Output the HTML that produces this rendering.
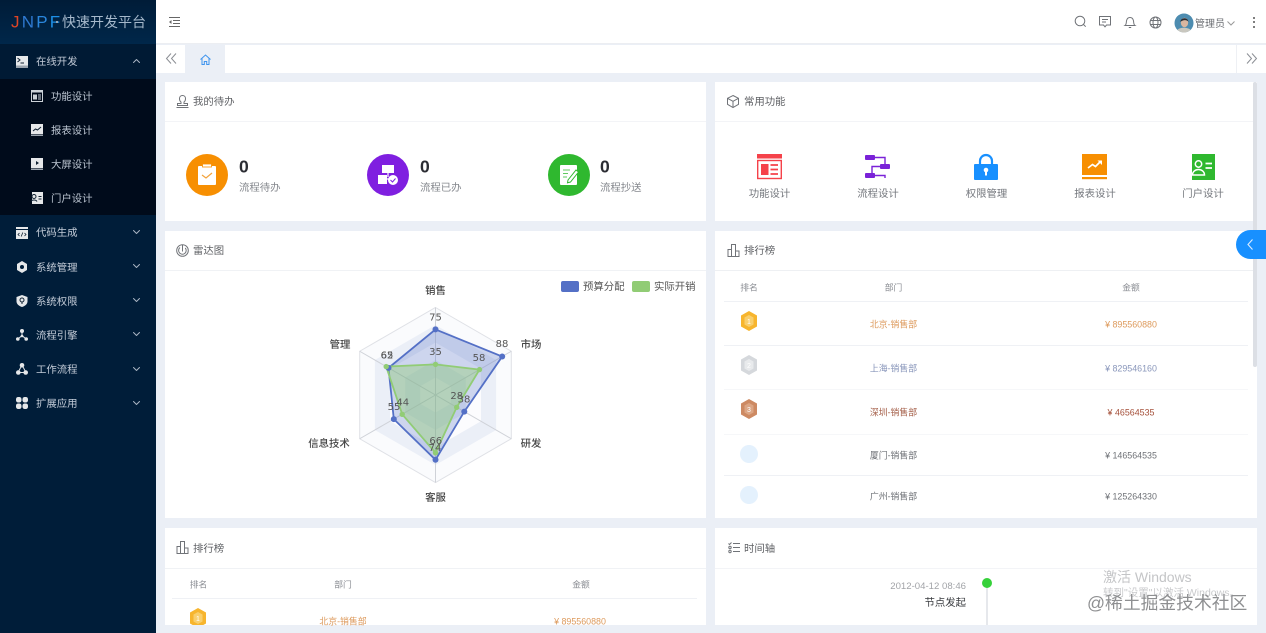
<!DOCTYPE html>
<html lang="zh"><head><meta charset="utf-8"><title>JNPF</title>
<style>
*{box-sizing:border-box;margin:0;padding:0}
html,body{width:1266px;height:633px;overflow:hidden;background:#ebeff6;font-family:"Liberation Sans","Noto Sans CJK SC",sans-serif;color:#606266}
#w{position:absolute;left:0;top:0;width:1266px;height:633px;overflow:hidden;filter:blur(.35px)}
.a{position:absolute}
.t,.c,.r{position:absolute;white-space:nowrap;line-height:1;font-size:10.4px}
.t{transform:translate(0,calc(-50% + 2px))}.c{transform:translate(-50%,calc(-50% + 2px))}.r{transform:translate(-100%,calc(-50% + 2px))}
svg{position:absolute;overflow:visible}
.card{position:absolute;background:#fff}
.ln{position:absolute;height:1px;background:#eff1f5}
.m{color:#c3ccd8}.s{color:#bcc6d2}
.g{fill:none;stroke:#707378;stroke-width:1}
.w{fill:none;stroke:#a9b5c3;stroke-width:1;stroke-linecap:round;stroke-linejoin:round}
.h{font-size:8.8px;color:#8b8e94}
.d{font-size:8.9px}
</style></head><body><div id="w">

<!-- sidebar -->
<div class="a" style="left:0;top:0;width:156px;height:633px;background:#001d39"></div>
<div class="a" style="left:0;top:0;width:156px;height:44px;background:linear-gradient(#001c38,#00274a)"></div>
<div class="a" style="left:0;top:44px;width:156px;height:35px;background:#001a34"></div>
<div class="a" style="left:0;top:79px;width:156px;height:136px;background:#000b1b"></div>
<div class="t" style="left:11px;top:20px;font-size:17px;letter-spacing:2.2px"><span style="color:#dd4526">J</span><span style="color:#2e78d0">N</span><span style="color:#2a86dc">P</span><span style="color:#1d8fe6">F</span></div>
<div class="a" style="left:56px;top:21px;width:2px;height:2px;background:#8ea4ba"></div>
<div class="t" style="left:62px;top:20px;font-size:14px;color:#a5b8cb">快速开发平台</div>

<!-- sidebar icons -->
<svg style="left:16px;top:56px" width="12" height="12" viewBox="0 0 12 12"><rect width="12" height="11" fill="#e6e8ea"/><rect y="9.5" width="12" height="2.5" fill="#9aa3ad"/><path d="M1.500 2 4 4 1.500 6M4.500 7H8" fill="none" stroke="#123" stroke-width="1"/></svg>
<svg style="left:31px;top:90px" width="12" height="12" viewBox="0 0 12 12"><rect width="12" height="2" fill="#ccd2d8"/><rect x=".5" y="2" width="11" height="9.500" fill="none" stroke="#ccd2d8"/><rect x="2" y="4.500" width="4" height="5" fill="#ccd2d8"/><path d="M7 5h3M7 7h3M7 9h3" stroke="#ccd2d8"/></svg>
<svg style="left:31px;top:124px" width="12" height="12" viewBox="0 0 12 12"><rect width="12" height="10" fill="#e6e8ea"/><rect y="10.500" width="12" height="1.500" fill="#9aa3ad"/><path d="M2 7 4.500 5 6.500 6 10 3" fill="none" stroke="#123"/></svg>
<svg style="left:31px;top:158px" width="12" height="12" viewBox="0 0 12 12"><rect width="12" height="10" fill="#e6e8ea"/><rect y="10.500" width="12" height="1.500" fill="#9aa3ad"/><path d="M5 3v4l3-2z" fill="#123"/></svg>
<svg style="left:31px;top:192px" width="12" height="12" viewBox="0 0 12 12"><rect x="1" width="11" height="12" fill="#e6e8ea"/><circle cx="3" cy="4.500" r="2" fill="none" stroke="#123"/><path d="M0 9.500C1 7.500 5 7.500 6 9.500M7.500 4.500h3M7.500 7h3" fill="none" stroke="#123"/></svg>
<svg style="left:16px;top:227px" width="12" height="12" viewBox="0 0 12 12"><rect width="12" height="2" fill="#e6e8ea"/><rect y="3" width="12" height="9" fill="#e6e8ea"/><path d="M3.500 6 2 7.500 3.500 9M8.500 6 10 7.500 8.500 9M6.800 5.500 5.200 9.500" fill="none" stroke="#123" stroke-width=".8"/></svg>
<svg style="left:16px;top:261px" width="12" height="12" viewBox="0 0 12 12"><path d="M6 0 11 3v6l-5 3-5-3V3z" fill="#e6e8ea"/><circle cx="6" cy="6" r="2" fill="#001d39"/></svg>
<svg style="left:16px;top:295px" width="12" height="12" viewBox="0 0 12 12"><path d="M6 0 11.500 2v4.500C11.500 9 9 11 6 12 3 11 .5 9 .5 6.500V2z" fill="#e6e8ea"/><circle cx="6" cy="5" r="2" fill="none" stroke="#123"/><path d="M6 7v2" stroke="#123"/></svg>
<svg style="left:16px;top:329px" width="12" height="12" viewBox="0 0 12 12"><path d="M6 2.500v4M6 6.500 2 10M6 6.500 10 10" stroke="#e6e8ea"/><circle cx="6" cy="2" r="2" fill="#e6e8ea"/><circle cx="1.800" cy="10" r="1.800" fill="#e6e8ea"/><circle cx="10.200" cy="10" r="1.800" fill="#e6e8ea"/><circle cx="6" cy="7" r="1.300" fill="#e6e8ea"/></svg>
<svg style="left:16px;top:363px" width="12" height="12" viewBox="0 0 12 12"><path d="M6 2 2 9.500h8z" fill="none" stroke="#e6e8ea"/><circle cx="6" cy="2.300" r="2.300" fill="#e6e8ea"/><circle cx="2.300" cy="9.500" r="2.300" fill="#e6e8ea"/><circle cx="9.700" cy="9.500" r="2.300" fill="#e6e8ea"/></svg>
<svg style="left:16px;top:397px" width="12" height="12" viewBox="0 0 12 12" fill="#e6e8ea"><rect width="5.500" height="5.500" rx="2.200"/><rect x="6.500" width="5.500" height="5.500" rx="2.200"/><rect y="6.500" width="5.500" height="5.500" rx="2.200"/><rect x="6.500" y="6.500" width="5.500" height="5.500" rx="2.200"/></svg>

<div class="t m" style="left:36px;top:61px">在线开发</div>
<div class="t s" style="left:51px;top:96px">功能设计</div>
<div class="t s" style="left:51px;top:130px">报表设计</div>
<div class="t s" style="left:51px;top:164px">大屏设计</div>
<div class="t s" style="left:51px;top:198px">门户设计</div>
<div class="t m" style="left:36px;top:232px">代码生成</div>
<div class="t m" style="left:36px;top:266.500px">系统管理</div>
<div class="t m" style="left:36px;top:300.500px">系统权限</div>
<div class="t m" style="left:36px;top:335px">流程引擎</div>
<div class="t m" style="left:36px;top:369px">工作流程</div>
<div class="t m" style="left:36px;top:403px">扩展应用</div>
<svg style="left:133px;top:59px" width="7" height="4"><path class="w" d="M.5 3.500 3.500.5l3 3"/></svg>
<svg style="left:133px;top:230px" width="7" height="4"><path class="w" d="M.5.500l3 3 3-3"/></svg>
<svg style="left:133px;top:264px" width="7" height="4"><path class="w" d="M.5.500l3 3 3-3"/></svg>
<svg style="left:133px;top:298px" width="7" height="4"><path class="w" d="M.5.500l3 3 3-3"/></svg>
<svg style="left:133px;top:332px" width="7" height="4"><path class="w" d="M.5.500l3 3 3-3"/></svg>
<svg style="left:133px;top:367px" width="7" height="4"><path class="w" d="M.5.500l3 3 3-3"/></svg>
<svg style="left:133px;top:401px" width="7" height="4"><path class="w" d="M.5.500l3 3 3-3"/></svg>

<!-- header -->
<div class="a" style="left:156px;top:0;width:1110px;height:44px;background:#fff;border-bottom:1px solid #eceef2"></div>
<svg style="left:168px;top:16px" width="13" height="12"><path d="M1 1.500h11M5 4.500h7M5 7.500h7M1 10.500h11" stroke="#666" fill="none"/><path d="M3.500 4 1 6l2.500 2z" fill="#666"/></svg>
<svg style="left:1074px;top:15px" width="14" height="14"><circle cx="6" cy="6" r="4.800" class="g"/><path d="m9.500 9.500 2.200 2.200" class="g"/></svg>
<svg style="left:1099px;top:16px" width="13" height="13"><path class="g" d="M.5.500h11v8.500H7.500L6 10.800 4.500 9H.5zM3 3.500h6M3 6h4"/></svg>
<svg style="left:1124px;top:16px" width="13" height="13"><path class="g" d="M1 9.500C2.500 8.500 2.200 6.500 2.500 4.800 3 2.500 4.500 1.500 6 1.500s3 1 3.500 3.300C9.800 6.500 9.500 8.500 11 9.500zM4.800 11.500h2.400"/></svg>
<svg style="left:1149px;top:16px" width="13" height="13"><circle cx="6.500" cy="6.500" r="5.500" class="g"/><ellipse cx="6.500" cy="6.500" rx="2.500" ry="5.500" class="g"/><path class="g" d="M1 4.500h11M1 8.500h11"/></svg>
<svg style="left:1174px;top:13px" width="20" height="20" viewBox="0 0 20 20"><circle cx="10" cy="10" r="9.500" fill="#4d8cb0"/><path d="M3.500 17c1.500-3 11-3 13 0a9.500 9.500 0 0 1-13 0z" fill="#c9c7bf"/><ellipse cx="10.500" cy="9.500" rx="3.700" ry="4.700" fill="#d9b6a0"/><path d="M6.500 9C6 4.500 14 3.500 14.500 9 13 6.500 9 6.500 6.500 9z" fill="#2b2f36"/></svg>
<div class="t" style="left:1195px;top:22.500px;font-size:10px;color:#6b6e73">管理员</div>
<svg style="left:1227px;top:21px" width="8" height="5"><path d="M.5.500l3.500 3.500 3.500-3.500" fill="none" stroke="#999"/></svg>
<div class="a" style="left:1253px;top:17px;width:2px;height:2px;background:#555;border-radius:1px"></div>
<div class="a" style="left:1253px;top:21px;width:2px;height:2px;background:#555;border-radius:1px"></div>
<div class="a" style="left:1253px;top:26px;width:2px;height:2px;background:#555;border-radius:1px"></div>

<!-- tabs -->
<div class="a" style="left:156px;top:45px;width:1110px;height:28px;background:#fff"></div>
<div class="a" style="left:185px;top:45px;width:40px;height:28px;background:#ebeff6"></div>
<div class="a" style="left:1236px;top:45px;width:1px;height:28px;background:#eef0f4"></div>
<svg style="left:166px;top:53px" width="11" height="11"><path d="M5 .5 .5 5.500 5 10.500M10 .5 5.500 5.500 10 10.500" fill="none" stroke="#8b8e94"/></svg>
<svg style="left:1246px;top:53px" width="11" height="11"><path d="M1 .5 5.500 5.500 1 10.500M6 .5 10.500 5.500 6 10.500" fill="none" stroke="#8b8e94"/></svg>
<svg style="left:200px;top:54px" width="11" height="11"><path d="M.5 5.500 5.500 1l5 4.500M2 4.500v6h2.300V7.500h2.400v3H9v-6" fill="none" stroke="#3f94ee"/></svg>

<!-- card 1 -->
<div class="card" style="left:165px;top:82px;width:541px;height:139px"></div>
<div class="ln" style="left:165px;top:121px;width:541px;background:#f3f4f7"></div>
<svg style="left:176px;top:95px" width="13" height="13"><path class="g" d="M.5 12.500h12M1.500 10.500v-2h3.500V7C3.500 6 3.500 4.500 3.500 3.500 3.500 1.500 5 .5 6.500.5s3 1 3 3c0 1 0 2.500-1.500 3.500v1.500h3.500v2z"/></svg>
<div class="t" style="left:193px;top:101px">我的待办</div>
<svg style="left:186px;top:154px" width="42" height="42"><circle cx="21" cy="21" r="21" fill="#f78f02"/><rect x="12" y="12" width="18" height="19" fill="#fff" rx="1"/><rect x="16.500" y="10" width="9" height="3" fill="#fff" stroke="#f78f02" stroke-width=".8"/><path d="M16 21l4 3 6-5" stroke="#f3a33c" fill="none" stroke-width="1.200"/></svg>
<svg style="left:367px;top:154px" width="42" height="42"><circle cx="21" cy="21" r="21" fill="#7f1fe0"/><rect x="15" y="11" width="12" height="8" fill="#fff"/><rect x="11" y="21" width="9" height="9" fill="#fff"/><path d="M21 19v4M20 25h4" stroke="#fff" stroke-width="1.200"/><circle cx="26" cy="26" r="5" fill="#fff"/><path d="m23.500 26 2 2 3-3.500" stroke="#7f1fe0" fill="none"/></svg>
<svg style="left:548px;top:154px" width="42" height="42"><circle cx="21" cy="21" r="21" fill="#2fb82f"/><rect x="12" y="11" width="17" height="20" rx="1" fill="#fff"/><path d="M15 16h7M15 19.500h5M15 23h4" stroke="#5fcb5f"/><path d="m20 26 8-10 2.500 2-8 10-3 .8z" fill="#fff" stroke="#2fb82f"/></svg>
<div class="t" style="left:239px;top:164.500px;font-size:17.500px;font-weight:700;color:#2b2d33">0</div>
<div class="t" style="left:420px;top:164.500px;font-size:17.500px;font-weight:700;color:#2b2d33">0</div>
<div class="t" style="left:600px;top:164.500px;font-size:17.500px;font-weight:700;color:#2b2d33">0</div>
<div class="t" style="left:239px;top:186.500px;color:#85888e">流程待办</div>
<div class="t" style="left:420px;top:186.500px;color:#85888e">流程已办</div>
<div class="t" style="left:600px;top:186.500px;color:#85888e">流程抄送</div>

<!-- card 2 -->
<div class="card" style="left:715px;top:82px;width:542px;height:139px"></div>
<div class="ln" style="left:715px;top:121px;width:542px;background:#f3f4f7"></div>
<svg style="left:727px;top:95px" width="12" height="13"><path class="g" d="M6 .5 11.500 3.300v6L6 12.500.5 9.300v-6zM.5 3.300 6 6.300l5.500-3M6 6.300v6"/></svg>
<div class="t" style="left:744px;top:101px">常用功能</div>
<svg style="left:757px;top:154px" width="25" height="25"><rect width="25" height="4.500" fill="#f5424a"/><rect x=".7" y="6.500" width="23.600" height="18" fill="none" stroke="#f5424a" stroke-width="1.400"/><rect x="4" y="10" width="7.500" height="11" fill="#f5424a"/><path d="M13.500 11h7.500M13.500 15.500h7.500M13.500 20h7.500" stroke="#f5424a" stroke-width="1.800"/></svg>
<svg style="left:865px;top:155px" width="25" height="24" fill="#7a22d8"><rect x="0" y="0" width="10" height="5" rx="1"/><rect x="15" y="9" width="10" height="5" rx="1"/><rect x="0" y="18" width="10" height="5" rx="1"/><path d="M10 2.500h10v7M15 11.500H7v8M10 20.500h10V23" fill="none" stroke="#7a22d8" stroke-width="1.400"/></svg>
<svg style="left:974px;top:154px" width="24" height="26"><path d="M6 11V7a6 6 0 0 1 12 0v4" fill="none" stroke="#1890ff" stroke-width="2.200"/><rect y="10" width="24" height="16" rx="1" fill="#1890ff"/><circle cx="12" cy="16" r="2.300" fill="#fff"/><rect x="11" y="17" width="2" height="4.500" fill="#fff"/></svg>
<svg style="left:1082px;top:154px" width="25" height="26"><rect width="25" height="21" fill="#f78f02"/><rect y="23" width="25" height="2.200" fill="#f78f02"/><path d="M6 14l4.500-3.500 3 2L19 7" fill="none" stroke="#fff" stroke-width="1.700"/><path d="M15.500 6.500H20V11z" fill="#fff"/></svg>
<svg style="left:1192px;top:154px" width="23" height="26"><rect width="23" height="26" fill="#2fb82f"/><circle cx="6.500" cy="10" r="3.200" fill="none" stroke="#fff" stroke-width="1.500"/><path d="M.5 21c0-3.500 3-5.500 6-5.500s6 2 6 5.500z" fill="none" stroke="#fff" stroke-width="1.500"/><path d="M13.500 9.500h6.500M13.500 14h6.500" stroke="#fff" stroke-width="1.800"/></svg>
<div class="c" style="left:769.500px;top:193px;color:#75787e">功能设计</div>
<div class="c" style="left:878px;top:193px;color:#75787e">流程设计</div>
<div class="c" style="left:986.500px;top:193px;color:#75787e">权限管理</div>
<div class="c" style="left:1095px;top:193px;color:#75787e">报表设计</div>
<div class="c" style="left:1203px;top:193px;color:#75787e">门户设计</div>

<!-- card 3 radar -->
<div class="card" style="left:165px;top:231px;width:541px;height:287px"></div>
<div class="ln" style="left:165px;top:270px;width:541px;background:#f0f2f5"></div>
<svg style="left:176px;top:244px" width="13" height="13"><circle cx="6.500" cy="6.500" r="5.800" class="g"/><path class="g" d="M4 3.500a3.800 3.800 0 1 0 5.300.5M6.500 1v6.500"/></svg>
<div class="t" style="left:193px;top:250px">雷达图</div>
<svg style="left:0;top:0" width="1266" height="633">
 <g transform="translate(435.500 395)">
  <polygon points="0,-87.500 75.800,-43.750 75.800,43.750 0,87.500 -75.800,43.750 -75.800,-43.750" fill="#fafbfd"/>
  <polygon points="0,-70 60.600,-35 60.600,35 0,70 -60.600,35 -60.600,-35" fill="#ebeff7"/>
  <polygon points="0,-52.500 45.500,-26.250 45.500,26.250 0,52.500 -45.500,26.250 -45.500,-26.250" fill="#fcfcfe"/>
  <polygon points="0,-35 30.300,-17.500 30.300,17.500 0,35 -30.300,17.500 -30.300,-17.500" fill="#ebeff7"/>
  <polygon points="0,-17.500 15.200,-8.750 15.200,8.750 0,17.500 -15.200,8.750 -15.200,-8.750" fill="#fcfcfe"/>
  <polygon points="0,-87.500 75.800,-43.750 75.800,43.750 0,87.500 -75.800,43.750 -75.800,-43.750" fill="none" stroke="#dfe1e6"/>
  <path d="M0-87.500V87.500M75.800-43.750-75.800 43.750M75.800 43.750-75.800-43.750" stroke="#cfd2d8" fill="none"/>
 </g>
 <polygon points="435.500,329.400 502.200,356.500 464.300,411.600 435.500,459.800 393.800,419.100 388.500,367.900" fill="#5470c6" fill-opacity=".28" stroke="#5470c6" stroke-width="1.800"/>
 <polygon points="435.500,364.400 479.500,369.600 456.700,407.300 435.500,452.800 402.200,414.300 386.200,366.600" fill="#91cc75" fill-opacity=".42" stroke="#91cc75" stroke-width="1.800"/>
 <g fill="#5470c6"><circle cx="435.500" cy="329.400" r="3"/><circle cx="502.200" cy="356.500" r="3"/><circle cx="464.300" cy="411.600" r="3"/><circle cx="435.500" cy="459.800" r="3"/><circle cx="393.800" cy="419.100" r="3"/><circle cx="388.500" cy="367.900" r="3"/></g>
 <g fill="#91cc75"><circle cx="435.500" cy="364.400" r="2.700"/><circle cx="479.500" cy="369.600" r="2.700"/><circle cx="456.700" cy="407.300" r="2.700"/><circle cx="435.500" cy="452.800" r="2.700"/><circle cx="402.200" cy="414.300" r="2.700"/><circle cx="386.200" cy="366.600" r="2.700"/></g>
 <g font-family="DejaVu Sans,sans-serif" font-size="10" fill="#555" text-anchor="middle">
  <text x="435.500" y="320.500">75</text><text x="502" y="347">88</text><text x="464" y="402.500">38</text><text x="435" y="451">74</text><text x="394" y="410">55</text><text x="387" y="358.500">62</text>
  <text x="435.500" y="355">35</text><text x="479" y="361">58</text><text x="456.700" y="399">28</text><text x="435.700" y="444">66</text><text x="402.700" y="405.500">44</text><text x="387" y="358.500">65</text>
 </g>
 <g font-family="Liberation Sans,Noto Sans CJK SC,sans-serif" font-size="10.400" fill="#444" text-anchor="middle" font-weight="500">
  <text x="435.500" y="294">销售</text><text x="531" y="348">市场</text><text x="531" y="447">研发</text><text x="435.500" y="501">客服</text><text x="329" y="447">信息技术</text><text x="340" y="348">管理</text>
 </g>
</svg>
<div class="a" style="left:561px;top:281px;width:18px;height:11px;background:#5470c6;border-radius:2px"></div>
<div class="t" style="left:583px;top:285.500px;color:#555">预算分配</div>
<div class="a" style="left:632px;top:281px;width:18px;height:11px;background:#91cc75;border-radius:2px"></div>
<div class="t" style="left:654px;top:285.500px;color:#555">实际开销</div>

<!-- card 4 table -->
<div class="card" style="left:715px;top:231px;width:542px;height:287px"></div>
<div class="ln" style="left:715px;top:270px;width:538px;background:#eef0f3"></div>
<svg style="left:727px;top:244px" width="13" height="13"><path class="g" d="M.5 12.500h12M1 12.500V5.500h3.500v7M4.500 12.500V.5h4v12M8.500 12.500V7h3.500v5.500"/></svg>
<div class="t" style="left:744px;top:250px">排行榜</div>
<div class="c h" style="left:749px;top:285.500px">排名</div>
<div class="c h" style="left:893.500px;top:285.500px">部门</div>
<div class="c h" style="left:1131px;top:285.500px">金额</div>
<div class="ln" style="left:724px;top:301px;width:524px"></div>
<div class="ln" style="left:724px;top:345px;width:524px"></div>
<div class="ln" style="left:724px;top:389px;width:524px;background:#f6f7f9"></div>
<div class="ln" style="left:724px;top:434px;width:524px;background:#f6f7f9"></div>
<div class="ln" style="left:724px;top:475px;width:524px"></div>
<svg style="left:740px;top:311px" width="18" height="20"><path d="M9 0 17 4.500v11L9 20 1 15.500v-11z" fill="#f7b52e"/><path d="M9 4 13.500 6.500v7L9 16l-4.500-2.500v-7z" fill="#f9cf6d"/><text x="9" y="13" font-size="7" fill="#fff" text-anchor="middle" font-family="Liberation Sans">1</text></svg>
<svg style="left:740px;top:355px" width="18" height="20"><path d="M9 0 17 4.500v11L9 20 1 15.500v-11z" fill="#d5d8dc"/><path d="M9 4 13.500 6.500v7L9 16l-4.500-2.500v-7z" fill="#e8eaec"/><text x="9" y="13" font-size="7" fill="#fff" text-anchor="middle" font-family="Liberation Sans">2</text></svg>
<svg style="left:740px;top:399px" width="18" height="20"><path d="M9 0 17 4.500v11L9 20 1 15.500v-11z" fill="#cd8a63"/><path d="M9 4 13.500 6.500v7L9 16l-4.500-2.500v-7z" fill="#dca685"/><text x="9" y="13" font-size="7" fill="#fff" text-anchor="middle" font-family="Liberation Sans">3</text></svg>
<div class="a" style="left:740px;top:445px;width:18px;height:18px;border-radius:50%;background:#e4f1fd"></div>
<div class="a" style="left:740px;top:486px;width:18px;height:18px;border-radius:50%;background:#e4f1fd"></div>
<div class="c d" style="left:893.500px;top:322.500px;color:#dd9a5c">北京-销售部</div>
<div class="c d" style="left:1131px;top:322.500px;color:#dd9a5c">¥ 895560880</div>
<div class="c d" style="left:893.500px;top:367px;color:#8a97bb">上海-销售部</div>
<div class="c d" style="left:1131px;top:367px;color:#8a97bb">¥ 829546160</div>
<div class="c d" style="left:893.500px;top:411px;color:#a5604a">深圳-销售部</div>
<div class="c d" style="left:1131px;top:411px;color:#a5503a">¥ 46564535</div>
<div class="c d" style="left:893.500px;top:453.500px;color:#6f7277">厦门-销售部</div>
<div class="c d" style="left:1131px;top:453.500px;color:#6f7277">¥ 146564535</div>
<div class="c d" style="left:893.500px;top:495px;color:#6f7277">广州-销售部</div>
<div class="c d" style="left:1131px;top:495px;color:#6f7277">¥ 125264330</div>

<!-- card 5 -->
<div class="card" style="left:165px;top:528px;width:541px;height:97px;overflow:hidden"></div>
<div class="ln" style="left:165px;top:568px;width:541px;background:#f0f2f5"></div>
<svg style="left:176px;top:541px" width="13" height="13"><path class="g" d="M.5 12.500h12M1 12.500V5.500h3.500v7M4.500 12.500V.5h4v12M8.500 12.500V7h3.500v5.500"/></svg>
<div class="t" style="left:193px;top:547.500px">排行榜</div>
<div class="c h" style="left:198.500px;top:583px">排名</div>
<div class="c h" style="left:343px;top:583px">部门</div>
<div class="c h" style="left:581px;top:583px">金额</div>
<div class="ln" style="left:172px;top:598px;width:525px"></div>
<div class="a" style="left:189px;top:608px;width:18px;height:17px;overflow:hidden"><svg style="left:0;top:0" width="18" height="20"><path d="M9 0 17 4.500v11L9 20 1 15.500v-11z" fill="#f7b52e"/><path d="M9 4 13.500 6.500v7L9 16l-4.500-2.500v-7z" fill="#f9cf6d"/><text x="9" y="13" font-size="7" fill="#fff" text-anchor="middle" font-family="Liberation Sans">1</text></svg></div>
<div class="c d" style="left:343px;top:619.500px;color:#dd9a5c">北京-销售部</div>
<div class="c d" style="left:580px;top:619.500px;color:#dd9a5c">¥ 895560880</div>

<!-- card 6 -->
<div class="card" style="left:715px;top:528px;width:542px;height:97px"></div>
<div class="ln" style="left:715px;top:568px;width:542px;background:#f3f4f7"></div>
<svg style="left:728px;top:542px" width="12" height="11"><path class="g" d="M5 1.500h7M5 5.500h7M5 9.500h7"/><path d="M.5 1.500l1 1L3.500.5" class="g"/><circle cx="2" cy="5.500" r="1.200" class="g"/><circle cx="2" cy="9.500" r="1.200" class="g"/></svg>
<div class="t" style="left:744px;top:547.500px">时间轴</div>
<div class="a" style="left:986px;top:583px;width:2px;height:42px;background:#e6e8ec"></div>
<div class="a" style="left:982px;top:578px;width:10px;height:10px;border-radius:50%;background:#36d13a"></div>
<div class="r" style="left:966px;top:585px;font-size:9.600px;color:#a2a4a8">2012-04-12 08:46</div>
<div class="r" style="left:966px;top:601.500px;color:#3a3c40">节点发起</div>

<!-- scrollbar, toggle, overlays -->
<div class="a" style="left:1253px;top:82px;width:4px;height:285px;background:#dcdfe5;border-radius:2px"></div>
<div class="a" style="left:1236px;top:230px;width:30px;height:29px;background:#1890ff;border-radius:15px 0 0 15px"></div>
<svg style="left:1247px;top:239px" width="7" height="11"><path d="M5.500 .5 1 5.500l4.500 5" fill="none" stroke="#dcecff" stroke-width="1.100"/></svg>
<div class="t" style="left:1103px;top:575px;font-size:14px;color:#c4c5c7">激活 Windows</div>
<div class="t" style="left:1103px;top:591px;font-size:10.500px;color:#c9cacc">转到"设置"以激活 Windows。</div>
<div class="t" style="left:1087px;top:601.500px;font-size:17.800px;color:#8e8f91">@稀土掘金技术社区</div>
</div></body></html>
